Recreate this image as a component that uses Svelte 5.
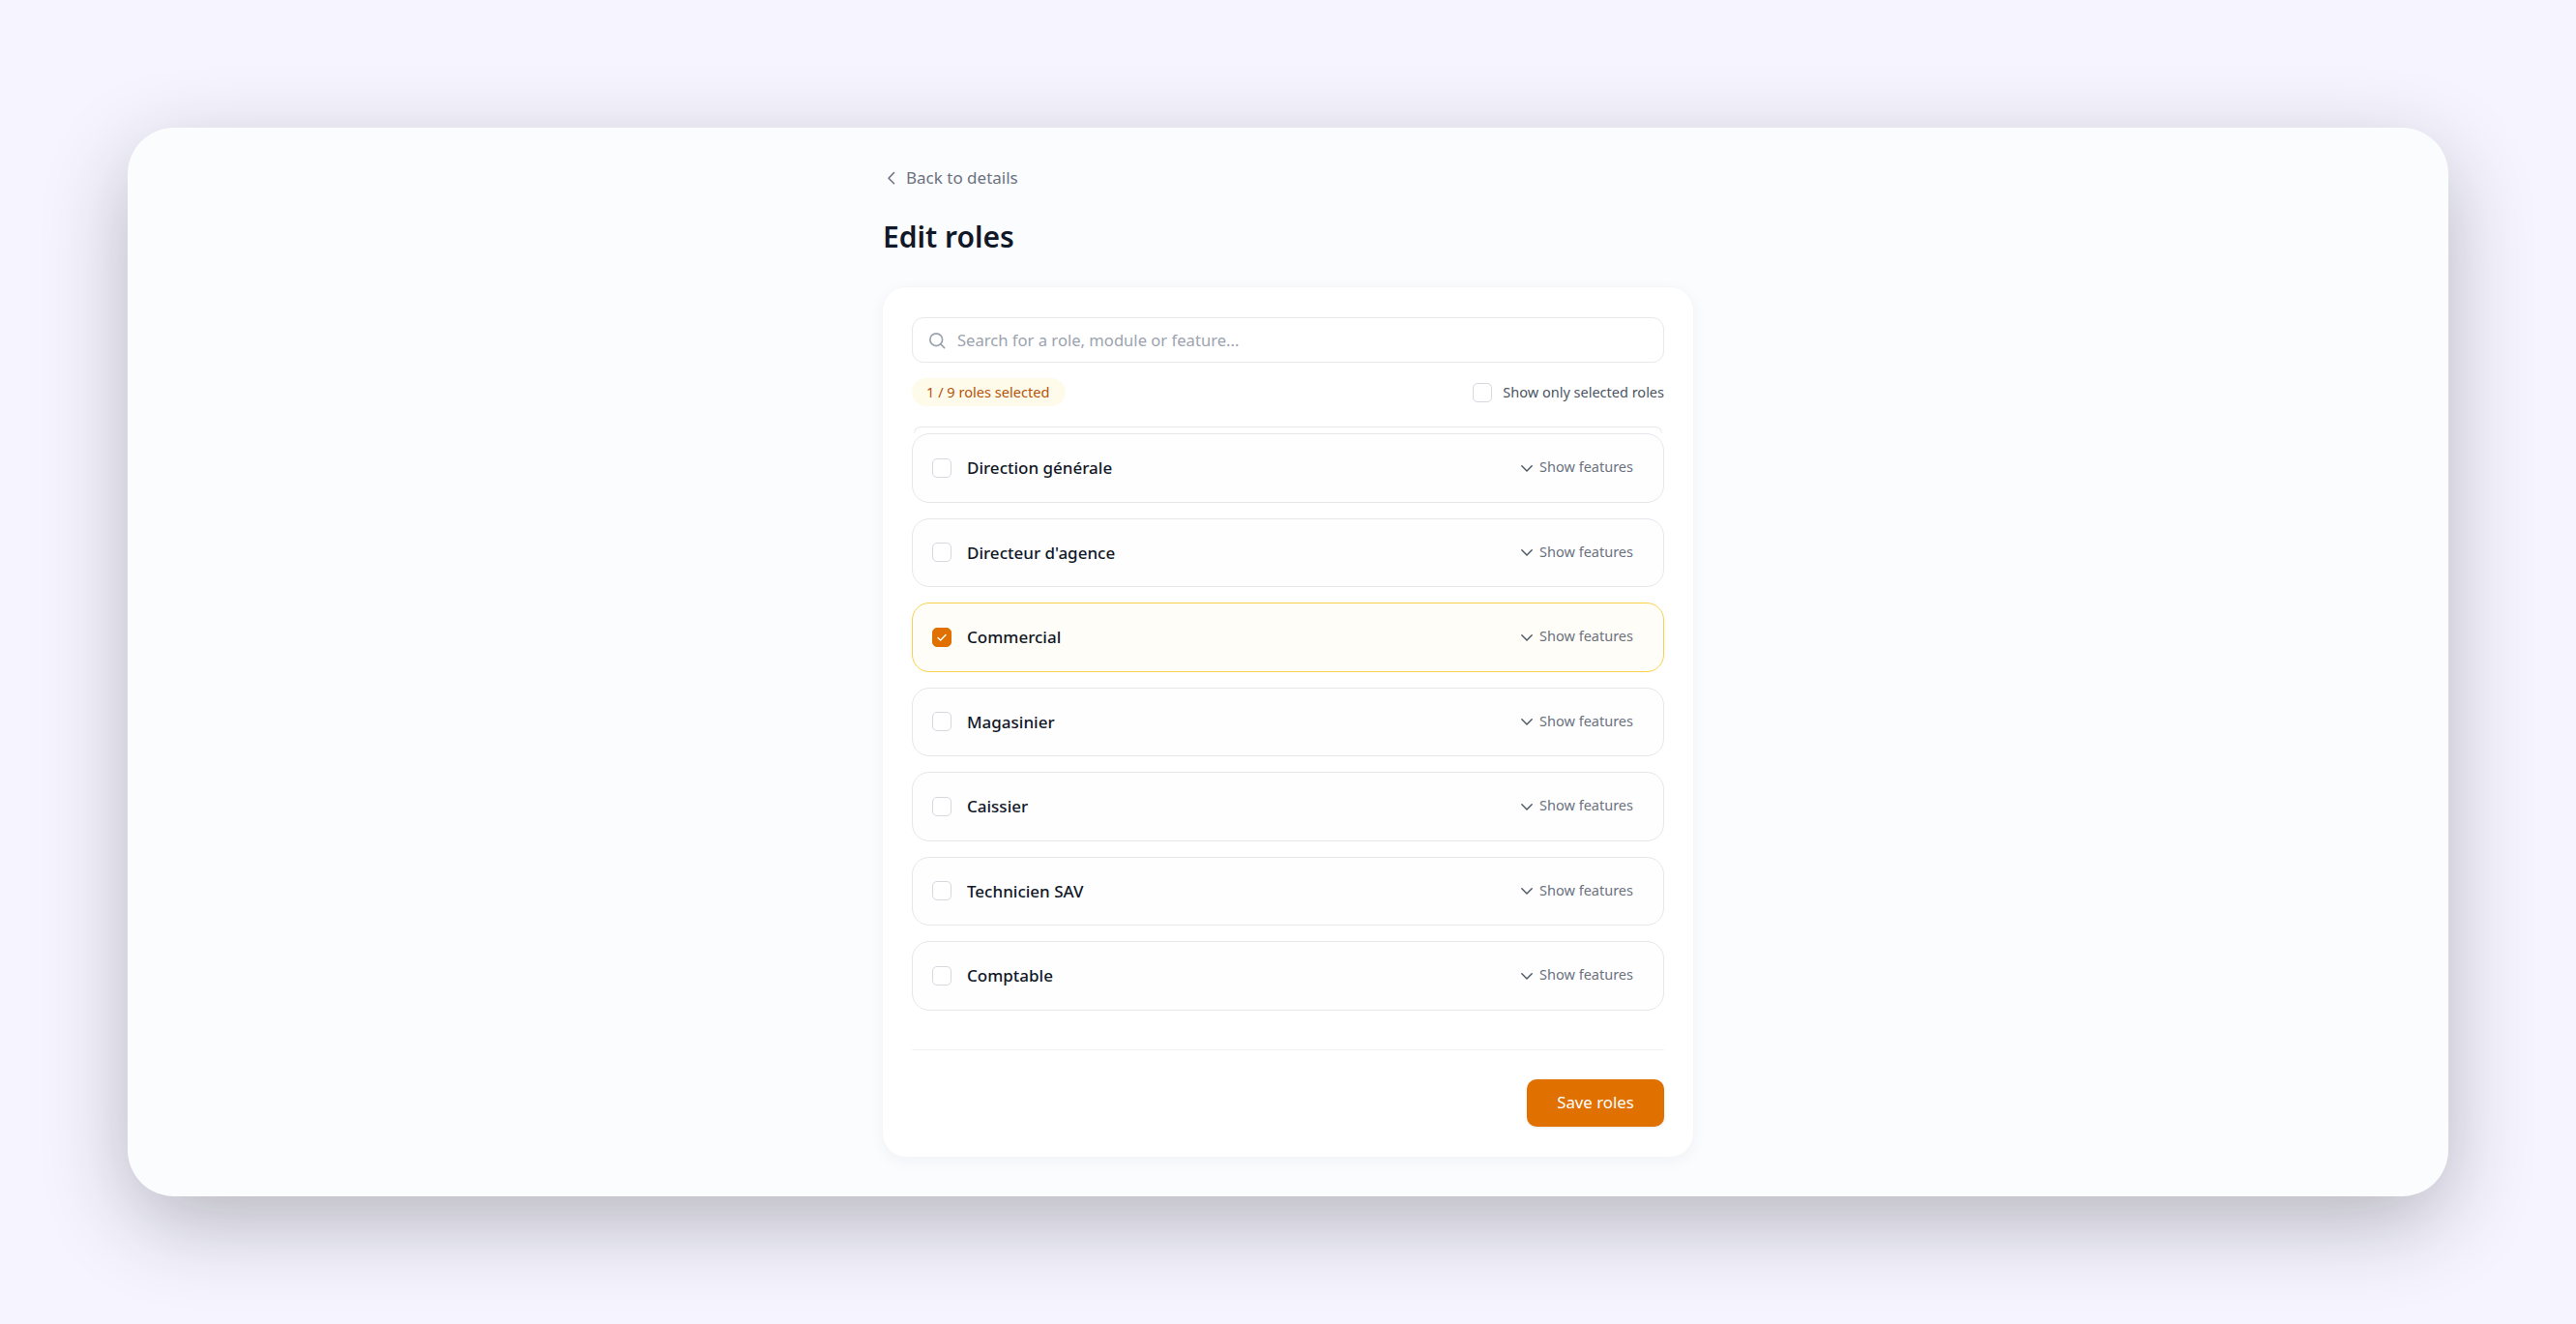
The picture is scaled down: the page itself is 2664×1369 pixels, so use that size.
<script>
  const roles = [
    { name: 'Direction générale', selected: false },
    { name: "Directeur d'agence", selected: false },
    { name: 'Commercial', selected: true },
    { name: 'Magasinier', selected: false },
    { name: 'Caissier', selected: false },
    { name: 'Technicien SAV', selected: false },
    { name: 'Comptable', selected: false }
  ];
</script>

<div class="page">
  <div class="window">
    <div class="content">
      <a class="back" href="#details">
        <svg width="18" height="18" viewBox="0 0 18 18" fill="none" stroke="currentColor" stroke-width="1.6" stroke-linecap="round" stroke-linejoin="round">
          <path d="M11.5 3.5 6 9.2l5.5 5.5" />
        </svg>
        <span>Back to details</span>
      </a>
      <h1>Edit roles</h1>

      <div class="card">
        <div class="search">
          <svg width="20" height="20" viewBox="0 0 20 20" fill="none" stroke="currentColor" stroke-width="1.7" stroke-linecap="round">
            <circle cx="9.2" cy="9.2" r="6.4" />
            <path d="m14 14 3.6 3.6" />
          </svg>
          <input type="text" placeholder="Search for a role, module or feature..." />
        </div>

        <div class="summary">
          <span class="badge">1 / 9 roles selected</span>
          <label class="only">
            <span class="check"></span>
            <span class="only-text">Show only selected roles</span>
          </label>
        </div>

        <div class="list">
          <div class="peek"></div>
          {#each roles as role}
            <div class="row" class:selected={role.selected}>
              <span class="check" class:on={role.selected}>
                {#if role.selected}
                  <svg width="14" height="14" viewBox="0 0 14 14" fill="none" stroke="white" stroke-width="1.4" stroke-linecap="round" stroke-linejoin="round">
                    <path d="m3 7.4 2.7 2.5L11 4.4" />
                  </svg>
                {/if}
              </span>
              <span class="name">{role.name}</span>
              <button class="features">
                <svg width="14" height="14" viewBox="0 0 14 14" fill="none" stroke="currentColor" stroke-width="1.4" stroke-linecap="round" stroke-linejoin="round">
                  <path d="m1.8 4.8 5.2 5.2 5.2-5.2" />
                </svg>
                <span class="features-text">Show features</span>
              </button>
            </div>
          {/each}
        </div>

        <div class="footer">
          <button class="save">Save roles</button>
        </div>
      </div>
    </div>
  </div>
</div>

<style>
  :global(body) {
    margin: 0;
    background: #f5f4ff;
  }

  .page {
    height: 1369px;
    box-sizing: border-box;
    padding: 132px 132px 0;
    font-family: "Noto Sans", "Open Sans", sans-serif;
    overflow: hidden;
  }

  .window {
    height: 1105px;
    box-sizing: border-box;
    padding-top: 41px;
    background: #fbfcfe;
    border-radius: 48px;
    box-shadow: 0 28px 90px -4px rgba(30, 30, 30, 0.3);
  }

  .content {
    width: 838px;
    margin: 0 auto;
  }

  .back {
    display: flex;
    align-items: center;
    gap: 6px;
    height: 22px;
    color: #6b7280;
    font-size: 17px;
    text-decoration: none;
  }

  .back span {
    padding-bottom: 2px;
  }

  h1 {
    margin: 29px 0 0;
    height: 73px;
    color: #111827;
    font-size: 30px;
    font-weight: 600;
    line-height: 42px;
  }

  .card {
    box-sizing: border-box;
    height: 899px;
    padding: 31px 30px 30px;
    background: #ffffff;
    border-radius: 24px;
    box-shadow: 0 0 0 1px #f5f6f8, 0 4px 16px rgba(30, 40, 70, 0.05);
  }

  .search {
    display: flex;
    align-items: center;
    gap: 11px;
    box-sizing: border-box;
    height: 47px;
    padding: 0 14px 0 15px;
    color: #9ca3af;
    border: 1.5px solid #e7e8ec;
    border-radius: 12px;
  }

  .search input {
    flex: 1;
    border: none;
    outline: none;
    padding: 0 0 1px;
    background: none;
    color: #111827;
    font: inherit;
    font-size: 16.6px;
  }

  .search input::placeholder {
    color: #9ca3af;
    opacity: 1;
  }

  .summary {
    display: flex;
    align-items: center;
    justify-content: space-between;
    margin-top: 16px;
    height: 29px;
  }

  .badge {
    display: flex;
    align-items: center;
    box-sizing: border-box;
    height: 29px;
    width: 159px;
    padding: 0 0 2px 15px;
    color: #b45309;
    background: #fffbeb;
    border-radius: 15px;
    font-size: 14.6px;
    white-space: nowrap;
  }

  .only {
    display: flex;
    align-items: center;
    gap: 11px;
    color: #4b5563;
    font-size: 14.5px;
  }

  .only-text {
    padding-bottom: 2px;
  }

  .check {
    display: flex;
    align-items: center;
    justify-content: center;
    flex: none;
    box-sizing: border-box;
    width: 20px;
    height: 20px;
    background: #ffffff;
    border: 1.5px solid #d5d8de;
    border-radius: 5px;
  }

  .check.on {
    background: #e07000;
    border-color: #e07000;
  }

  .list {
    display: flex;
    flex-direction: column;
    gap: 16px;
    margin-top: 21px;
  }

  .peek {
    box-sizing: border-box;
    height: 7px;
    margin: 0 2px -16px;
    border: 1.5px solid #e7e8ec;
    border-bottom: none;
    border-radius: 18px 18px 0 0;
  }

  .row {
    display: flex;
    align-items: center;
    box-sizing: border-box;
    height: 71.5px;
    padding: 0 31px 0 20px;
    background: #fefeff;
    border: 1.5px solid #e5e7eb;
    border-radius: 18px;
  }

  .row.selected {
    background: #fffdf7;
    border-color: #fad14b;
  }

  .name {
    flex: 1;
    margin-left: 16px;
    color: #111827;
    font-size: 17px;
    font-weight: 500;
  }

  .features {
    display: flex;
    align-items: center;
    gap: 6px;
    padding: 0;
    color: #6b7280;
    background: none;
    border: none;
    font: inherit;
    font-size: 14.5px;
  }

  .features svg {
    color: #4b5563;
  }

  .features-text {
    padding-bottom: 3px;
  }

  .footer {
    display: flex;
    justify-content: flex-end;
    margin-top: 40px;
    padding-top: 30px;
    border-top: 1.5px solid #f1f2f4;
  }

  .save {
    width: 142px;
    height: 49px;
    padding-bottom: 2px;
    color: #ffffff;
    background: #e07000;
    border: none;
    border-radius: 10px;
    box-shadow: 0 1px 3px rgba(0, 0, 0, 0.1);
    font: inherit;
    font-size: 16.8px;
  }
</style>
